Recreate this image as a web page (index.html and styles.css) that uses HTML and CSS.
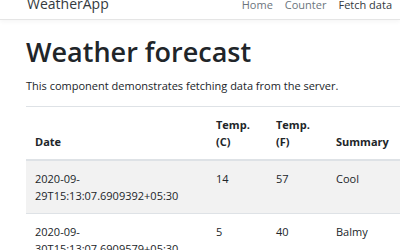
FILE: index.html
```html
<!DOCTYPE html>
<html lang="en">
<head>
    <meta charset="UTF-8">
    <meta name="viewport" content="width=device-width, initial-scale=1.0">
    <title>WeatherApp</title>
    <link rel="stylesheet" href="styles.css">
</head>
<body>

    <header class="navbar">
        <a class="brand" href="#">WeatherApp</a>
        <nav class="nav-links">
            <a href="#">Home</a>
            <a href="#">Counter</a>
            <a href="#" class="active">Fetch data</a>
        </nav>
    </header>

    <main class="container">
        <h1>Weather forecast</h1>
        <p>This component demonstrates fetching data from the server.</p>

        <table class="forecast">
            <thead>
                <tr>
                    <th class="col-date">Date</th>
                    <th class="col-num">Temp. (C)</th>
                    <th class="col-num">Temp. (F)</th>
                    <th class="col-sum">Summary</th>
                </tr>
            </thead>
            <tbody>
                <tr>
                    <td>2020-09-29T15:13:07.6909392+05:30</td>
                    <td>14</td>
                    <td>57</td>
                    <td>Cool</td>
                </tr>
                <tr>
                    <td>2020-09-30T15:13:07.6909579+05:30</td>
                    <td>5</td>
                    <td>40</td>
                    <td>Balmy</td>
                </tr>
            </tbody>
        </table>
    </main>

</body>
</html>
```

FILE: styles.css
```css
* {
    margin: 0;
    padding: 0;
    box-sizing: border-box;
}

body {
    font-family: 'Open Sans', 'Liberation Sans', sans-serif;
    font-size: 11px;
    color: #212529;
    background-color: #ffffff;
    overflow: hidden;
}

a {
    text-decoration: none;
}

/* شريط التنقل */
.navbar {
    display: flex;
    justify-content: space-between;
    align-items: flex-start;
    height: 25px;
    padding: 0 8px 0 27px;
    border-bottom: 1px solid #e5e5e5;
    box-shadow: 0 2px 4px rgba(0, 0, 0, 0.04);
    margin-top: -5px;
    line-height: 18px;
}

.brand {
    font-size: 14px;
    color: #343a40;
}

.nav-links {
    display: flex;
    gap: 12px;
    padding-top: 1px;
}

.nav-links a {
    font-size: 11px;
    color: #6c757d;
}

.nav-links a.active {
    color: #343a40;
}

.container {
    padding: 0 0 0 26px;
}

h1 {
    font-size: 27px;
    font-weight: 600;
    line-height: 36px;
    margin-top: 14px;
    margin-bottom: 7px;
}

p {
    font-size: 11px;
    line-height: 18px;
    margin-bottom: 11px;
}

.forecast {
    width: 400px;
    border-collapse: collapse;
}

.forecast th,
.forecast td {
    text-align: left;
    vertical-align: top;
    padding: 9px;
    line-height: 17px;
    border-top: 1px solid #dee2e6;
}

.forecast th {
    vertical-align: bottom;
    font-weight: 700;
    border-bottom: 2px solid #dee2e6;
}

.forecast tbody tr:nth-child(odd) {
    background-color: #f2f2f2;
}

.col-date {
    width: 181px;
}

.col-num {
    width: 60px;
}

.forecast td:first-child {
    word-break: break-word;
}
```
